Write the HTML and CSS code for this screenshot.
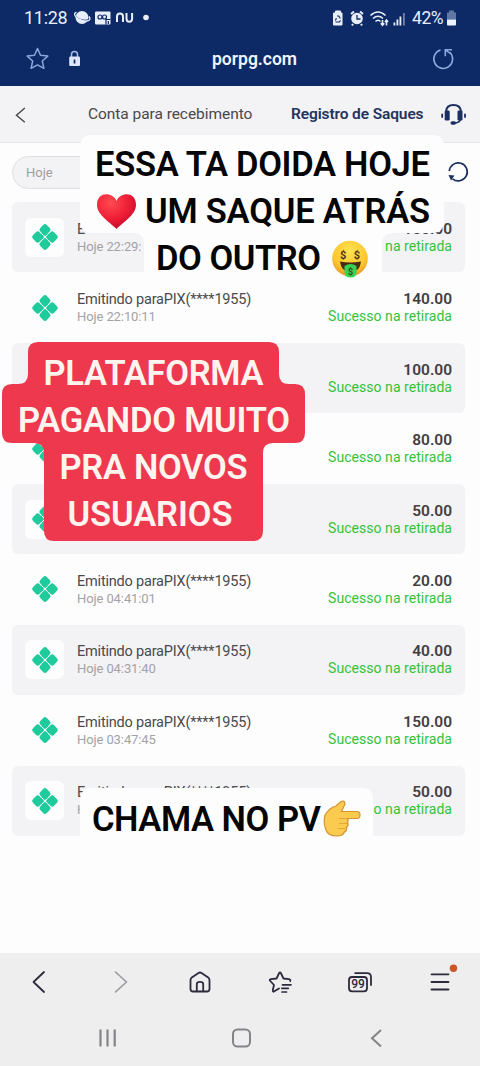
FILE: index.html
```html
<!DOCTYPE html>
<html lang="pt">
<head>
<meta charset="utf-8">
<title>porpg.com</title>
<link rel="stylesheet" href="styles.css">
</head>
<body>
<svg class="defs" width="0" height="0">
  <defs>
    <g id="pix" transform="rotate(45 13 13)" fill="#1fcb9c">
      <rect x="3.200" y="3.200" width="9.300" height="9.300" rx="2.600"/>
      <rect x="13.500" y="3.200" width="9.300" height="9.300" rx="2.600"/>
      <rect x="3.200" y="13.500" width="9.300" height="9.300" rx="2.600"/>
      <rect x="13.500" y="13.500" width="9.300" height="9.300" rx="2.600"/>
      <path d="M8 8h4.500v4.500H8zM13.500 8H18v4.500h-4.500zM8 13.500h4.500V18H8zM13.500 13.500H18V18h-4.500z"/>
    </g>
    <radialGradient id="heart" cx=".35" cy=".25" r=".8"><stop offset="0" stop-color="#ff4a50"/><stop offset=".6" stop-color="#ed1c35"/><stop offset="1" stop-color="#bd0c2d"/></radialGradient>
    <radialGradient id="face" cx=".5" cy=".3" r=".7"><stop offset="0" stop-color="#ffe14f"/><stop offset=".7" stop-color="#fdc62f"/><stop offset="1" stop-color="#e99523"/></radialGradient>
  </defs>
</svg>
<div class="phone">
  <div class="status">
    <span class="time">11:28</span>
    <svg class="notif" width="84" height="20" viewBox="0 0 84 20">
      <ellipse cx="8" cy="9.500" rx="6.500" ry="6.500" fill="#e8eefc"/>
      <path d="M1 6C2 11 10 14 16 11" fill="none" stroke="#0d2a66" stroke-width="1.100"/>
      <path d="M2.500 4.500C-2 5 2 11 8 12.500C14 14 18 12 15 8.500" fill="none" stroke="#e8eefc" stroke-width="1.300"/>
      <rect x="21" y="3.500" width="15.500" height="13" rx="1" fill="#e8eefc"/>
      <g fill="none" stroke="#0d2a66" stroke-width="1.200">
        <circle cx="26" cy="9" r="2"/><circle cx="30.500" cy="9" r="2"/><path d="M32 16.500v-5h4.500M34.300 13v3"/>
      </g>
      <g fill="none" stroke="#e8eefc" stroke-width="2">
        <path d="M43 14V8.500q0-3 3-3q3 0 3 3V14M52.500 5v5.500q0 3.200 2.800 3.200q2.800 0 2.800-3.200V5"/>
      </g>
      <circle cx="72" cy="9.500" r="2.800" fill="#e8eefc"/>
    </svg>
    <svg class="sys" width="76" height="20" viewBox="0 0 76 20">
      <path d="M4.500 3h5v2H11v12H2.500V5h2z" fill="#e8eefc" stroke="#e8eefc" stroke-linejoin="round"/>
      <path d="M4.300 12.500l1.200-2.300M6 8h1.800l1.500 2.500M9.500 12.500l-1 1.500h-4" fill="none" stroke="#0d2a66" stroke-width="1.200"/>
      <circle cx="26" cy="10.500" r="5.800" fill="#e8eefc"/>
      <path d="M20 6l3-2.500M32 6l-3-2.500M22 16l-1 1.500M30 16l1 1.500" stroke="#e8eefc" stroke-width="2"/>
      <path d="M26 7v4h3.500" stroke="#0d2a66" stroke-width="1.300" fill="none"/>
      <g fill="none" stroke="#e8eefc" stroke-width="1.600">
        <path d="M39.500 7.500q7.500-7 15 0M42 10.500q5-4.500 10 0M44.500 13.500q2.500-2.500 5 0M51.500 12v5M49.800 15.200l1.700 2 1.700-2M55.500 17.500v-5M54 14l1.500-2 1.500 2"/>
      </g>
      <g fill="#e8eefc"><rect x="62.500" y="14.500" width="1.800" height="3"/><rect x="65.500" y="11.500" width="1.800" height="6"/><rect x="68.500" y="8.500" width="1.800" height="9"/><rect x="72" y="5" width="1.800" height="12.500" opacity=".45"/></g>
    </svg>
    <span class="pct">42%</span>
    <svg class="batt" width="11" height="18" viewBox="0 0 11 18"><path d="M3 1.500h5v2h2v7H1v-7h2z" fill="#6076a5"/><path d="M1 10.500h9v5q0 1-1 1H2q-1 0-1-1z" fill="#eef3ff"/></svg>
  </div>
  <div class="urlbar">
    <svg class="star" width="24" height="24" viewBox="0 0 24 24"><path d="M12.500 1.500l3 6.800 7.300.8-5.500 4.900 1.600 7.300-6.400-3.400-6.400 3.400 1.600-7.300L2.200 9.100l7.300-.8z" fill="none" stroke="#8ca7dc" stroke-width="1.500" stroke-linejoin="round"/></svg>
    <svg class="lock" width="14" height="18" viewBox="0 0 14 18"><path d="M4.500 8V4.500q0-3 3-3t3 3V8" fill="none" stroke="#a9bce6" stroke-width="1.500"/><rect x="2.200" y="6.500" width="10.800" height="9.500" rx="1.300" fill="#dde6fb"/><path d="M7.500 9.500v4" stroke="#0d2a66" stroke-width="1.700"/></svg>
    <span class="host">porpg.com</span>
    <svg class="reload" width="24" height="24" viewBox="0 0 24 24"><path d="M9.500 3A9.400 9.400 0 1 0 18.800 5.300M14.300 9.300V2.800H21M14.600 3.100l4.700 3.200" fill="none" stroke="#8ca7dc" stroke-width="1.600"/></svg>
  </div>
  <div class="header">
    <svg class="hback" width="12" height="18" viewBox="0 0 12 18"><path d="M10.800 3L2.500 10.300l8.300 7" fill="none" stroke="#4b4b4f" stroke-width="1.500"/></svg>
    <span class="tab">Conta para recebimento</span>
    <span class="tab on">Registro de Saques</span>
    <svg class="headset" width="26" height="24" viewBox="0 0 26 24"><path d="M5 9.500Q5.500 3 12.500 3T20 9.500" fill="none" stroke="#1b2e60" stroke-width="2"/><rect x="3.700" y="8.500" width="5" height="10" rx="1.300" fill="#1b2e60"/><rect x="16.500" y="8.500" width="5" height="10" rx="1.300" fill="#1b2e60"/><path d="M1.200 12.500V15M24 12.500V15" stroke="#1b2e60" stroke-width="1.800" stroke-linecap="round"/><path d="M19.500 17.500q-1 3.500-6.500 3.500" fill="none" stroke="#1b2e60" stroke-width="1.500"/><rect x="9.500" y="19.300" width="5.500" height="3.400" rx="1.700" fill="#1b2e60"/></svg>
  </div>
  <div class="filter">
    <span class="select">Hoje</span>
    <svg class="sync" width="22" height="22" viewBox="0 0 22 22"><path d="M2.300 10A9 9 0 1 1 5.500 17.800" fill="none" stroke="#1b2e60" stroke-width="1.700"/><path d="M1.500 14l6 .5-3.500 5z" fill="#1b2e60"/></svg>
  </div>
  <div class="list">
    <div class="row alt"><span class="logo"><svg width="26" height="26"><use href="#pix"/></svg></span><span class="info"><b>E</b><i>Hoje 22:29:</i></span><span class="amt"><b>100.00</b><i>Sucesso na retirada</i></span></div>
    <div class="row"><span class="logo"><svg width="26" height="26"><use href="#pix"/></svg></span><span class="info"><b>Emitindo paraPIX(****1955)</b><i>Hoje 22:10:11</i></span><span class="amt"><b>140.00</b><i>Sucesso na retirada</i></span></div>
    <div class="row alt"><span class="amt"><b>100.00</b><i>Sucesso na retirada</i></span></div>
    <div class="row"><span class="logo"><svg width="26" height="26"><use href="#pix"/></svg></span><span class="amt"><b>80.00</b><i>Sucesso na retirada</i></span></div>
    <div class="row alt"><span class="logo"><svg width="26" height="26"><use href="#pix"/></svg></span><span class="amt"><b>50.00</b><i>Sucesso na retirada</i></span></div>
    <div class="row"><span class="logo"><svg width="26" height="26"><use href="#pix"/></svg></span><span class="info"><b>Emitindo paraPIX(****1955)</b><i>Hoje 04:41:01</i></span><span class="amt"><b>20.00</b><i>Sucesso na retirada</i></span></div>
    <div class="row alt"><span class="logo"><svg width="26" height="26"><use href="#pix"/></svg></span><span class="info"><b>Emitindo paraPIX(****1955)</b><i>Hoje 04:31:40</i></span><span class="amt"><b>40.00</b><i>Sucesso na retirada</i></span></div>
    <div class="row"><span class="logo"><svg width="26" height="26"><use href="#pix"/></svg></span><span class="info"><b>Emitindo paraPIX(****1955)</b><i>Hoje 03:47:45</i></span><span class="amt"><b>150.00</b><i>Sucesso na retirada</i></span></div>
    <div class="row alt"><span class="logo"><svg width="26" height="26"><use href="#pix"/></svg></span><span class="info"><b>Emitindo paraPIX(****1955)</b><i>H</i></span><span class="amt"><b>50.00</b><i>Sucesso na retirada</i></span></div>
  </div>
  <div class="bottom">
    <div class="tools">
      <svg viewBox="0 0 28 28"><path d="M18 4L7.500 14 18 24" fill="none" stroke="#2c2a3c" stroke-width="1.800" stroke-linecap="round" stroke-linejoin="round"/></svg>
      <svg viewBox="0 0 28 28"><path d="M9.500 4L20.500 14 9.500 24" fill="none" stroke="#99979b" stroke-width="1.600" stroke-linecap="round" stroke-linejoin="round"/></svg>
      <svg viewBox="0 0 28 28"><path d="M4.500 12q0-1.500 1.300-2.500L12.500 5q1.500-1 3 0l6.700 4.500q1.300 1 1.300 2.500v9q0 2.500-2.500 2.500H7q-2.500 0-2.500-2.500zM10.800 23v-7q0-2.200 3.200-2.200t3.200 2.200v7" fill="none" stroke="#2c2a3c" stroke-width="1.800"/></svg>
      <svg viewBox="0 0 28 28"><path d="M13 20.500L7.500 23.800Q6.500 23.500 6.800 22L8 17 3.800 12.500Q3.500 11.500 5 11.200L10.500 10.500 13.200 5Q14 4 14.800 5L17.500 10.500 23 11.200Q24.800 11.700 24.200 13" fill="none" stroke="#2c2a3c" stroke-width="1.800" stroke-linejoin="round" stroke-linecap="round"/><path d="M16.500 16.800h8.500M15.800 20.300h6.500M16 24h4.500" stroke="#2c2a3c" stroke-width="1.700" stroke-linecap="round"/></svg>
      <svg viewBox="0 0 28 28"><rect x="3" y="9" width="18" height="14.300" rx="3" fill="none" stroke="#2c2a3c" stroke-width="1.800"/><path d="M8.500 5.200H21q4 0 4 4v8.500" fill="none" stroke="#2c2a3c" stroke-width="1.800"/><text x="12" y="20.400" class="count">99</text></svg>
      <svg viewBox="0 0 28 28"><path d="M5.500 6.300h17M5.500 14h17M5.500 21.500h17" stroke="#2c2a3c" stroke-width="1.800" stroke-linecap="round"/><circle cx="27.500" cy="0.200" r="3.700" fill="#cf5325"/></svg>
    </div>
    <div class="nav">
      <svg viewBox="0 0 28 28"><path d="M6.500 5.500v17M13.500 5.500v17M20.700 5.500v17" stroke="#858387" stroke-width="2.200"/></svg>
      <svg viewBox="0 0 28 28"><rect x="5" y="5.500" width="17" height="17" rx="4.500" fill="none" stroke="#858387" stroke-width="2"/></svg>
      <svg viewBox="0 0 28 28"><path d="M19 6L10 14.300l9 8.200" fill="none" stroke="#858387" stroke-width="2"/></svg>
    </div>
  </div>

  <svg class="stickers" width="480" height="1066" viewBox="0 0 480 1066">
    <path d="M92 135H432Q444 135 444 147V221Q444 233 432 233H393Q382 233 382 244V271Q382 283 370 283H156Q144 283 144 271V244Q144 233 133 233H92Q80 233 80 221V147Q80 135 92 135Z" fill="#fefdfe"/>
    <g class="big dark">
      <text x="95" y="176" textLength="335">ESSA TA DOIDA HOJE</text>
      <text x="145" y="223" textLength="285">UM SAQUE ATRÁS</text>
      <text x="156" y="270" textLength="165">DO OUTRO</text>
    </g>
    <path d="M116.500 229C111 223 97 215 97 205C97 191 113 192 116.500 201C120 192 136 191 136 205C136 215 122 223 116.500 229Z" fill="url(#heart)"/>
    <g>
      <circle cx="350" cy="258.500" r="17.800" fill="url(#face)"/>
      <path d="M340 261.500Q350 263.500 361 261.500Q360 272 350.500 272T340 261.500Z" fill="#4d2a13"/>
      <path d="M344.500 266q6-4 12 0v6q0 5.500-6 5.500t-6-5.500z" fill="#2ed653"/>
      <g class="dollar"><text x="343.200" y="258.500" font-size="11">$</text><text x="356.800" y="258.500" font-size="11">$</text><text x="350.500" y="275" font-size="9">$</text></g>
    </g>
    <path d="M38 342H269Q279 342 279 352V374Q279 384 289 384H295Q305 384 305 394V433Q305 443 295 443H273Q263 443 263 453V531Q263 541 253 541H54Q44 541 44 531V453Q44 443 34 443H12Q2 443 2 433V394Q2 384 12 384H18Q28 384 28 374V352Q28 342 38 342Z" fill="#ee384e"/>
    <g class="big light">
      <text x="43.500" y="385" textLength="220">PLATAFORMA</text>
      <text x="18" y="432" textLength="272">PAGANDO MUITO</text>
      <text x="59.500" y="479" textLength="188">PRA NOVOS</text>
      <text x="67.500" y="526" textLength="165">USUARIOS</text>
    </g>
    <path d="M92 788H362Q373 788 373 799V845H80V800Q80 788 92 788Z" fill="#fefdfe"/>
    <g class="big dark"><text x="92" y="831" textLength="229">CHAMA NO PV</text></g>
    <path d="M325 815Q329 808 336 806L341 801.500Q345 800 345 804L341.500 811.500H357Q360 811.500 360 815T357 818.500H347Q349 820 347.500 822.500Q349 825 346.500 827.500Q347 831 344.500 832Q343 836 337 836Q328 836 326 830Q323 823 325 815Z" fill="#fbcb50" stroke="#d59430" stroke-width="1.200"/>
    <path d="M339 818.500h8M339 823.500h8M338 828.500h7" fill="none" stroke="#e0a337" stroke-width=".9"/>
  </svg>
</div>
</body>
</html>
```

FILE: styles.css
```css
* { box-sizing: border-box; }
body { margin: 0; font-family: Roboto, "Liberation Sans", sans-serif; }
.defs { display: block; }
svg { display: block; flex: none; overflow: visible; }
.phone { position: relative; width: 480px; height: 1066px; overflow: hidden; display: flex; flex-direction: column; background: #fefdfe; }
.status { height: 35px; background: #0d2a66; display: flex; align-items: center; padding: 0 23px 0 24px; color: #e8eefc; }
.time { width: 50px; font-size: 18px; letter-spacing: -0.3px; }
.sys { margin-left: auto; }
.pct { width: 34px; margin-left: 5px; font-size: 17.500px; letter-spacing: -0.4px; }
.urlbar { height: 51px; background: #0d2a66; display: grid; grid-template-columns: 42px 76px 1fr 24px; align-items: center; padding: 0 25px 4px 25px; }
.host { padding-left: 69px; color: #eef3ff; font-size: 17.500px; font-weight: 600; }
.header { height: 57px; background: #f3f2f5; border-bottom: 1px solid #e6e5e8; display: flex; align-items: center; padding: 0 13px 0 14px; }
.tab { margin-left: 62px; width: 165px; white-space: nowrap; color: #48484b; font-size: 15.500px; letter-spacing: -0.05px; }
.tab.on { margin-left: 38px; width: 134px; color: #24335f; font-weight: 600; letter-spacing: -0.12px; }
.headset { margin-left: auto; }
.filter { height: 58.900px; display: flex; align-items: center; justify-content: space-between; padding: 0 11px 0 12px; }
.select { width: 150px; height: 33px; border: 1px solid #dfdee1; border-radius: 17px; background: #f3f2f5; padding: 0 13px; line-height: 31px; font-size: 13px; color: #a09fa3; }
.list { padding: 0 15px 0 12px; flex: 1; }
.row { height: 70.480px; border-radius: 6px; display: flex; align-items: center; padding: 0 13px 0 13px; }
.row.alt { background: #f3f2f4; }
.logo { width: 39px; height: 39px; border-radius: 6px; background: #fefdfe; display: flex; align-items: center; justify-content: center; }
.info { margin-left: 13px; }
.info b, .info i, .amt b, .amt i { display: block; font-style: normal; white-space: nowrap; }
.info b { font-size: 14.500px; line-height: 18px; font-weight: 400; letter-spacing: -0.2px; color: #4a494d; }
.info i { font-size: 13px; line-height: 15px; letter-spacing: -0.1px; color: #a3a2a6; }
.amt { margin-left: auto; text-align: right; }
.amt b { font-size: 15.500px; line-height: 18px; font-weight: 600; color: #414044; }
.amt i { font-size: 14px; line-height: 17px; letter-spacing: 0.04px; color: #35c23a; }
.bottom { height: 113px; background: #efeeef; }
.tools { height: 57px; display: flex; align-items: center; justify-content: space-between; padding: 0 26px; }
.tools svg, .nav svg { width: 28px; height: 28px; }
.nav { height: 56px; display: flex; align-items: center; justify-content: space-between; padding: 0 90px 0 94px; }
.count { font-size: 12px; font-weight: 500; text-anchor: middle; fill: #2c2a3c; }
.stickers { position: absolute; left: 0; top: 0; }
.big { font-size: 34.500px; font-weight: 600; }
.dark { fill: #050505; }
.light { fill: #fff4ee; }
.dollar { fill: #4e3a16; font-weight: 700; text-anchor: middle; }
```
